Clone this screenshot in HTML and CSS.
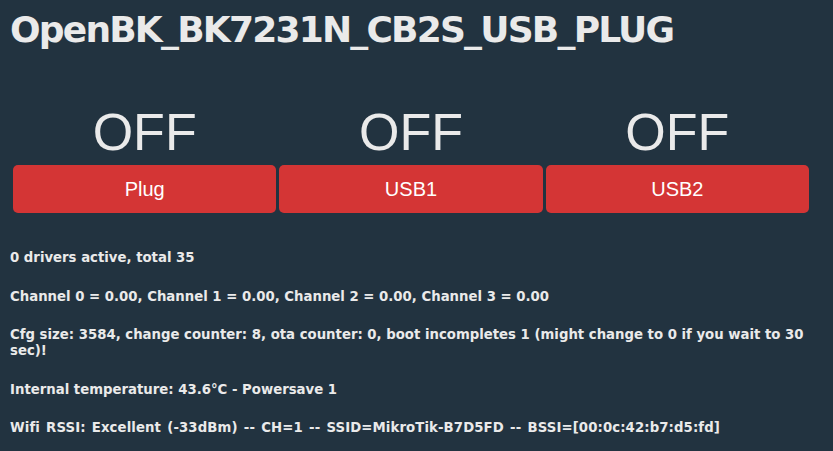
FILE: index.html
```html
<!DOCTYPE html>
<html lang="en">
<head>
    <!-- Meta and Page Setup -->
    <meta charset="UTF-8">
    <meta name="viewport" content="width=device-width, initial-scale=1.0">
    <title>OpenBK_BK7231N_CB2S_USB_PLUG</title>

    <link rel="stylesheet" href="styles.css">
</head>
<body>

<!-- Main Content Container -->
<div class="container">
    <h1>OpenBK_BK7231N_CB2S_USB_PLUG</h1>

    <!-- Relay States and Toggle Buttons -->
    <div class="relays">
        <div class="relay">
            <div class="state">OFF</div>
            <button>Plug</button>
        </div>
        <div class="relay">
            <div class="state">OFF</div>
            <button>USB1</button>
        </div>
        <div class="relay">
            <div class="state">OFF</div>
            <button>USB2</button>
        </div>
    </div>

    <!-- Device Status -->
    <div class="status">
        <h5>0 drivers active, total 35</h5>
        <h5>Channel 0 = 0.00, Channel 1 = 0.00, Channel 2 = 0.00, Channel 3 = 0.00</h5>
        <h5>Cfg size: 3584, change counter: 8, ota counter: 0, boot incompletes 1 (might change to 0 if you wait to 30 sec)!</h5>
        <h5>Internal temperature: 43.6°C - Powersave 1</h5>
        <h5 class="wifi">Wifi RSSI: Excellent (-33dBm) -- CH=1 -- SSID=MikroTik-B7D5FD -- BSSI=[00:0c:42:b7:d5:fd]</h5>
    </div>
</div>

</body>
</html>
```

FILE: styles.css
```css
body {
    font-family: 'DejaVu Sans', Verdana, sans-serif;
    margin: 0;
    background-color: #223340;
    color: #eaeaea;
}

/* Main Container Styling */
.container {
    padding: 0 24px 0 10px;
}

h1 {
    font-size: 36px;
    line-height: 36px;
    letter-spacing: -1.8px;
    font-weight: bold;
    margin: 12px 0 0 0;
}

/* Relay Row */
.relays {
    display: flex;
    gap: 3px;
    margin: 58px 0 0 3px;
}

.relay {
    flex: 1;
    display: flex;
    flex-direction: column;
    align-items: stretch;
}

.state {
    font-family: 'Liberation Sans', Arial, sans-serif;
    font-size: 52px;
    line-height: 52px;
    text-align: center;
    margin-bottom: 7px;
}

/* Button Styling */
button {
    background-color: #d43535;
    color: white;
    border: none;
    height: 48px;
    padding: 0;
    font-family: 'Liberation Sans', Arial, sans-serif;
    font-size: 20px;
    border-radius: 5px;
    cursor: pointer;
}

/* Status Lines */
.status {
    margin-top: 37px;
}

h5 {
    font-size: 13.28px;
    line-height: 16px;
    font-weight: bold;
    margin: 0 0 22.5px 0;
}

.wifi {
    word-spacing: 1.5px;
    letter-spacing: 0.1px;
}
```
